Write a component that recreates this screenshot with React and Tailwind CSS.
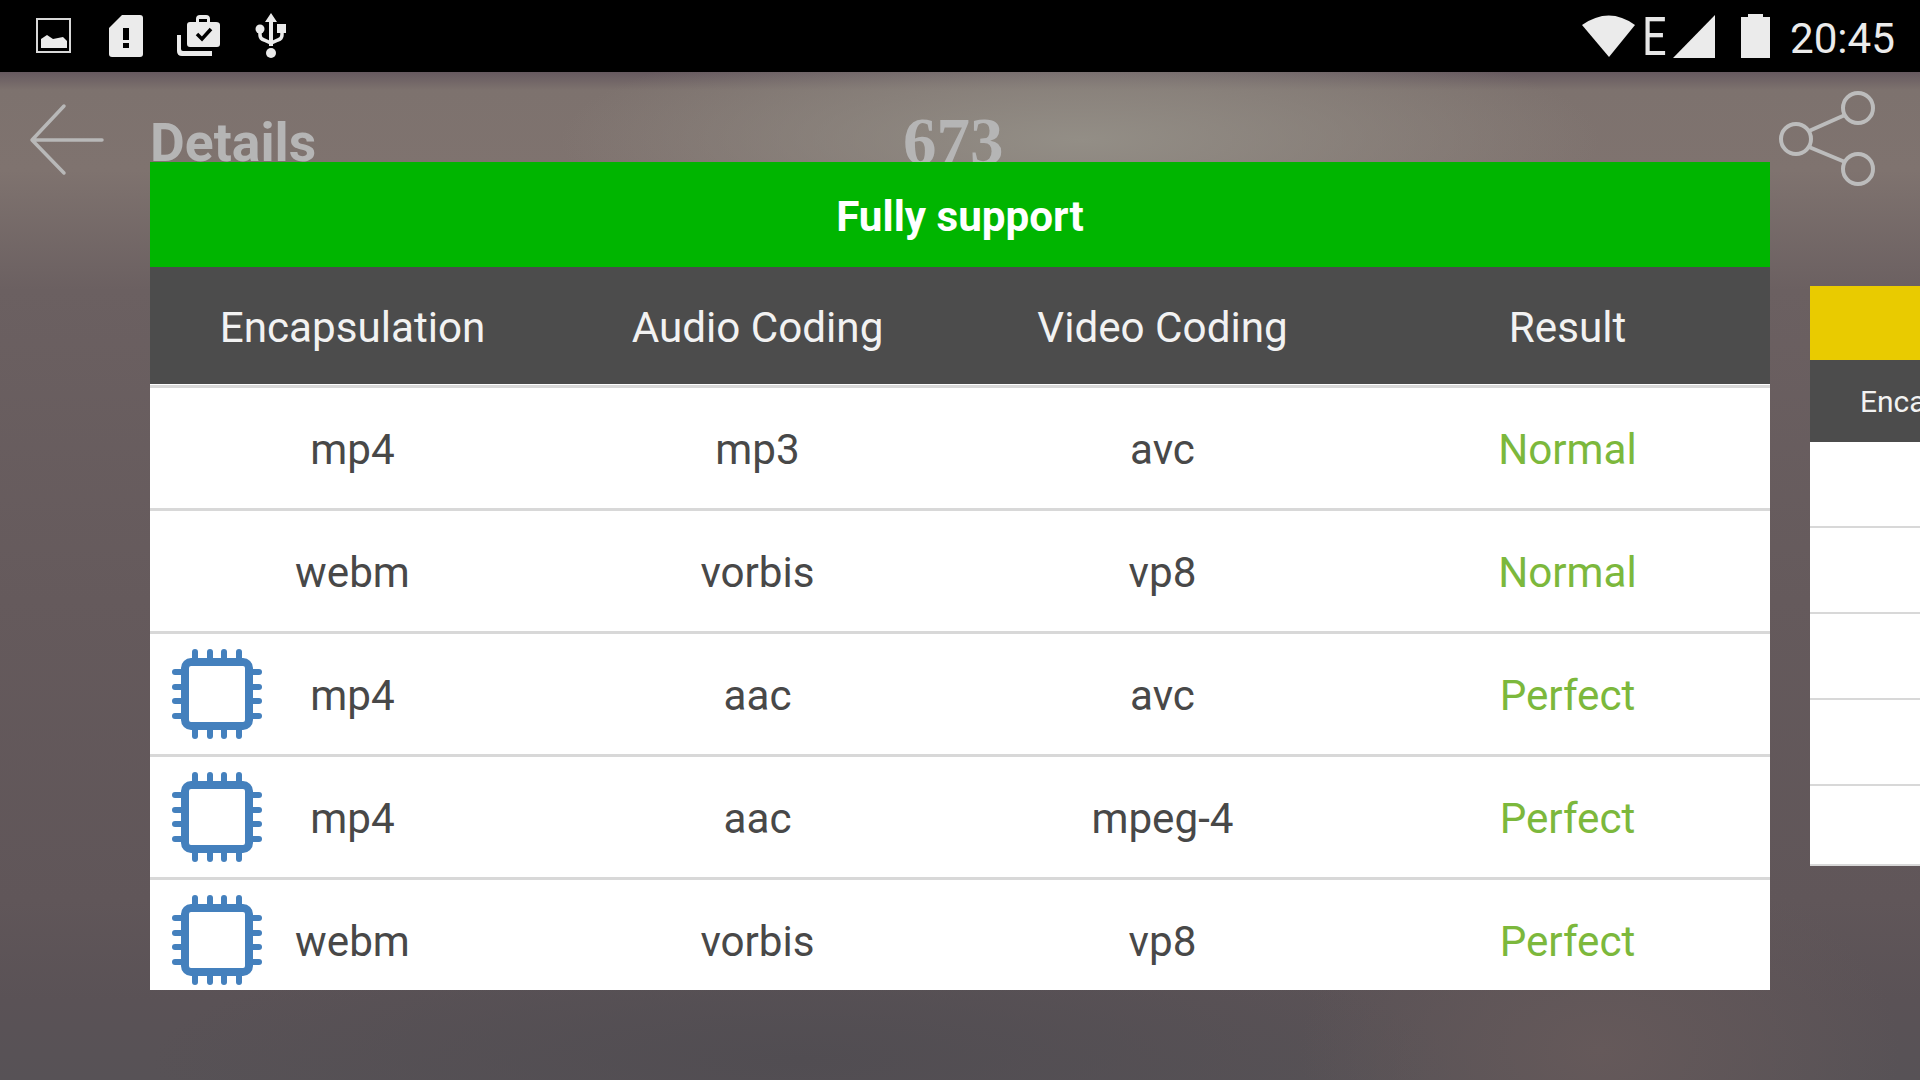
import React from "react";

const rows = [
  { a: "mp4", b: "mp3", c: "avc", r: "Normal" },
  { a: "webm", b: "vorbis", c: "vp8", r: "Normal" },
  { a: "mp4", b: "aac", c: "avc", r: "Perfect", chip: true },
  { a: "mp4", b: "aac", c: "mpeg-4", r: "Perfect", chip: true },
  { a: "webm", b: "vorbis", c: "vp8", r: "Perfect", chip: true },
];

function ChipIcon() {
  const pins = [23, 38, 52, 67];
  return (
    <svg width="90" height="90" viewBox="0 0 90 90" className="absolute left-[22px] top-[15px]">
      <rect x="13" y="13" width="64" height="64" rx="6" fill="none" stroke="#4480bd" strokeWidth="8" />
      {pins.map((p) => (
        <g key={p} stroke="#4480bd" strokeWidth="6" strokeLinecap="round">
          <path d={`M${p} 3V9`} />
          <path d={`M${p} 81V87`} />
          <path d={`M3 ${p}H9`} />
          <path d={`M81 ${p}H87`} />
        </g>
      ))}
    </svg>
  );
}

function StatusIcons() {
  return (
    <div className="flex items-center">
      <svg width="36" height="36" viewBox="0 0 36 36" className="ml-[36px]">
        <rect x="1" y="1" width="33" height="33" fill="none" stroke="#d8d8d8" strokeWidth="2" />
        <path d="M5 30V21L11 17L17 21L22 20L27 19L31 23V30Z" fill="#ebebeb" />
      </svg>
      <svg width="35" height="42" viewBox="0 0 35 42" className="ml-[37px]">
        <path d="M13 0H31Q34 0 34 3V39Q34 42 31 42H3Q0 42 0 39V13Z" fill="#ebebeb" />
        <rect x="14" y="13" width="6" height="12" fill="#000" />
        <rect x="14" y="28" width="6" height="5" fill="#000" />
      </svg>
      <svg width="44" height="42" viewBox="0 0 44 42" className="ml-[33px]">
        <path d="M0 20H4V34Q4 36 6 36H35V41H5Q0 41 0 36Z" fill="#ebebeb" />
        <path d="M10 10Q10 7 13 7H19V4Q19 0 23 0H29Q33 0 33 4V7H39Q43 7 43 10V29Q43 32 40 32H13Q10 32 10 29ZM22 4V7H30V4Z" fill="#ebebeb" fillRule="evenodd" />
        <path d="M20 19L25 24L34 14" fill="none" stroke="#000" strokeWidth="3.5" />
      </svg>
      <svg width="32" height="46" viewBox="0 0 32 46" className="ml-[34px]">
        <path d="M16 0L22 9H18V33H14V9H10Z" fill="#ebebeb" />
        <circle cx="16" cy="40" r="5" fill="#ebebeb" />
        <circle cx="5" cy="16" r="4.5" fill="#ebebeb" />
        <rect x="22" y="11" width="9" height="9" fill="#ebebeb" />
        <path d="M5 18V22Q5 26 9 27L16 30L23 27Q27 26 27 22V18" fill="none" stroke="#ebebeb" strokeWidth="3.5" />
      </svg>
    </div>
  );
}

function StatusRight() {
  return (
    <div className="flex items-center">
      <svg width="54" height="44" viewBox="0 0 54 44">
        <path d="M0 11Q27 -8 53 11L27 43Z" fill="#ebebeb" />
      </svg>
      <span className="ml-[6px] w-[25px] mt-[2px] origin-left scale-x-[0.8] font-['Roboto'] text-[54px] leading-none text-[#e6e6e6]">E</span>
      <svg width="43" height="43" viewBox="0 0 43 43" className="ml-[6px]">
        <path d="M42 0V43H0Z" fill="#ebebeb" />
      </svg>
      <svg width="29" height="44" viewBox="0 0 29 44" className="ml-[25px]">
        <path d="M7 3V0H22V3H29V44H0V3Z" fill="#ebebeb" />
      </svg>
      <span className="ml-[20px] mt-[6px] font-['Roboto'] text-[42.2px] leading-none text-[#ebebeb]">20:45</span>
    </div>
  );
}

function MainPanel() {
  return (
    <div className="w-[1620px] h-[828px] flex-none overflow-hidden bg-white font-['Roboto'] text-[42.2px]">
      <div className="h-[105px] pt-[5px] bg-[#00b500] flex items-center justify-center font-bold text-white">
        Fully support
      </div>
      <div className="h-[117px] pt-[5px] bg-[#4c4c4c] grid grid-cols-4 items-center text-center text-[#f2f2f2]">
        <div>Encapsulation</div>
        <div>Audio Coding</div>
        <div>Video Coding</div>
        <div>Result</div>
      </div>
      <div className="mt-px border-t-[3px] border-[#d8d8d8]">
        {rows.map((row, i) => (
          <div key={i} className="relative h-[123px] pt-[4px] border-b-[3px] border-[#d8d8d8] grid grid-cols-4 items-center text-center text-[#484848]">
            {row.chip && <ChipIcon />}
            <div>{row.a}</div>
            <div>{row.b}</div>
            <div>{row.c}</div>
            <div className="text-[#7cb83c]">{row.r}</div>
          </div>
        ))}
      </div>
    </div>
  );
}

function SidePanel() {
  return (
    <div className="mt-[124px] w-[1150px] h-[580px] flex-none overflow-hidden bg-white font-['Roboto']">
      <div className="h-[74px] bg-[#e9cb00]" />
      <div className="h-[82px] bg-[#4c4c4c] flex items-center pl-[50px] text-[30px] text-[#f2f2f2]">Encapsulation</div>
      {[0, 1, 2, 3, 4].map((i) => (
        <div key={i} className="h-[86px] last:h-[80px] border-b-2 border-[#d8d8d8]" />
      ))}
    </div>
  );
}

export default function App() {
  return (
    <div className="relative w-[1920px] h-[1080px] overflow-hidden bg-[radial-gradient(ellipse_520px_120px_at_1080px_140px,#938e86_0%,#938e8600_100%),radial-gradient(ellipse_300px_200px_at_1600px_1050px,#65595a_0%,#65595a00_100%),radial-gradient(ellipse_650px_130px_at_800px_1060px,#514d52_0%,#514d5200_100%),linear-gradient(180deg,#000_72px,#66595f_72px,#7d726e_90px,#7f736f_170px,#6b6061_290px,#655a5c_600px,#605659_900px,#5a5256_1000px,#575256_1080px)]">
      <div className="h-[72px] bg-black flex items-center justify-between pr-[25px]">
        <StatusIcons />
        <StatusRight />
      </div>
      <div className="h-[90px] relative flex items-start">
        <svg width="76" height="74" viewBox="0 0 76 74" className="ml-[29px] mt-[31px]">
          <path d="M35 3L3 37L35 70M3 37H73" fill="none" stroke="#b8b8b8" strokeWidth="3.5" strokeLinecap="round" strokeLinejoin="round" />
        </svg>
        <span className="ml-[45px] mt-[40px] font-['Roboto'] font-bold text-[53.5px] leading-[61px] text-[#b5b5b5]">Details</span>
        <span className="absolute left-[903px] top-[32px] font-['Liberation_Serif'] font-bold text-[67px] leading-[74px] text-[#b5b5b5]">673</span>
        <svg width="100" height="100" viewBox="0 0 100 100" className="absolute left-[1776px] top-[18px]">
          <g fill="none" stroke="#bcbcbc" strokeWidth="4">
            <circle cx="82" cy="18" r="15" />
            <circle cx="20" cy="49" r="15" />
            <circle cx="82" cy="79" r="15" />
            <path d="M33 41L69 25M33 57L69 72" />
          </g>
        </svg>
      </div>
      <div className="absolute inset-0 pt-[162px] pl-[150px] flex items-start gap-[40px]">
        <MainPanel />
        <SidePanel />
      </div>
    </div>
  );
}
